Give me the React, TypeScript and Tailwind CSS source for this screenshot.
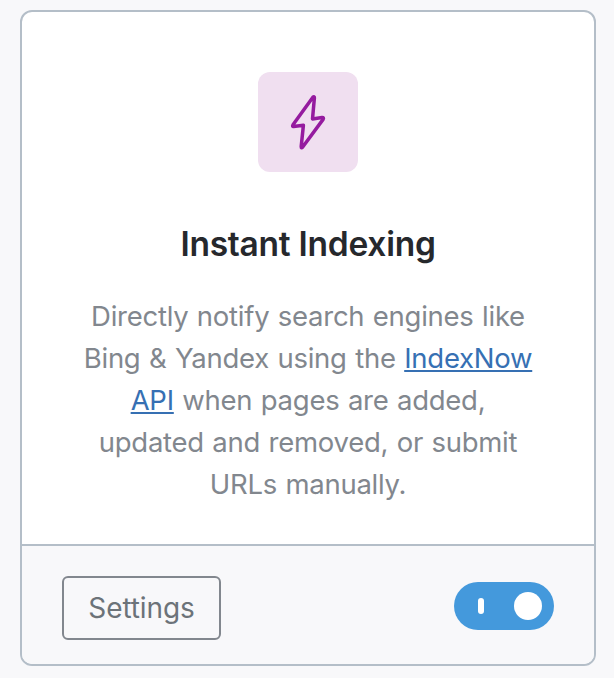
import React, { useState } from 'react';

export default function App() {
  const [enabled, setEnabled] = useState(true);

  return (
    <div className="h-[678px] bg-[#f8f8fa] pt-[10px] pl-5 font-['Inter','Liberation_Sans',sans-serif]">
      <div className="flex h-[656px] w-[576px] flex-col overflow-hidden rounded-xl border-2 border-[#b4bec8] bg-white">
        <div className="flex flex-1 flex-col items-center pt-[60px]">
          <div className="h-[100px] w-[100px] rounded-xl bg-[#f0dff0]">
            <svg viewBox="0 0 100 100" className="h-full w-full" fill="none">
              <path
                d="M54.9 25.2Q56.5 23.9 56.4 25.9L54.5 47L64 45.6Q66.2 45.5 65.1 47.4L44.7 75Q43.1 76.7 43.2 74.5L45.4 53.2L35.6 54.5Q34 54.5 35 52.8Z"
                stroke="#951b9f"
                strokeWidth="3.5"
                strokeLinejoin="round"
              />
            </svg>
          </div>

          <h2 className="mt-[50px] text-[33.5px] leading-[44px] font-semibold tracking-[-0.25px] text-[#26282c]">
            Instant Indexing
          </h2>

          <p className="mt-[29px] text-center text-[27.5px] leading-[42px] tracking-[-0.26px] [word-spacing:1px] whitespace-nowrap text-[#82878e]">
            Directly notify search engines like
            <br />
            Bing &amp; Yandex using the{' '}
            <a href="#" className="text-[#3670b3] underline decoration-2 underline-offset-[2px]">
              IndexNow
              <br />
              API
            </a>{' '}
            when pages are added,
            <br />
            updated and removed, or submit
            <br />
            URLs manually.
          </p>
        </div>

        <div className="flex h-[120px] items-start justify-between border-t-2 border-[#b4bec8] bg-[#f8f8fa] px-10 pt-[30px]">
          <button className="h-16 w-[159px] rounded-md border-2 border-[#82878e] text-[28px] tracking-[-0.1px] text-[#6c7379]">
            Settings
          </button>

          <button
            role="switch"
            aria-checked={enabled}
            aria-label="Instant Indexing"
            onClick={() => setEnabled(!enabled)}
            className="mt-[6px] flex h-12 w-[100px] items-center justify-between rounded-full bg-[#4499dc] pr-3 pl-6"
          >
            <span className="h-4 w-[6px] rounded-[3px] bg-white" />
            <span className="h-7 w-7 rounded-full bg-white" />
          </button>
        </div>
      </div>
    </div>
  );
}
